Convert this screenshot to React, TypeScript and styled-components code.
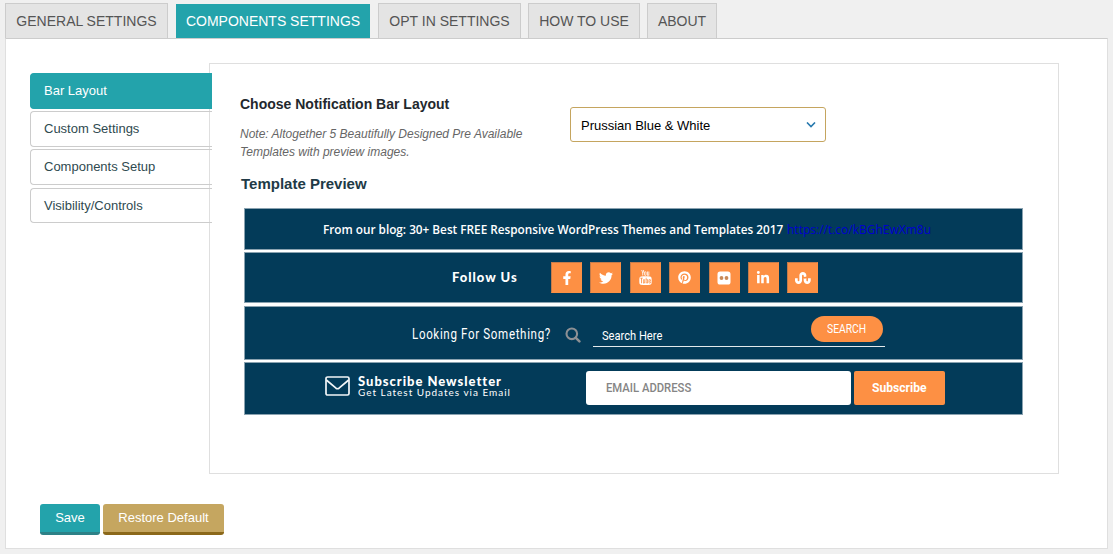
import React from 'react';
import styled, { createGlobalStyle } from 'styled-components';
import { FaFacebookF, FaTwitter, FaPinterest, FaLinkedinIn, FaStumbleupon } from 'react-icons/fa';
import { TfiYoutube } from 'react-icons/tfi';

const GlobalStyle = createGlobalStyle`
  * { box-sizing: border-box; }
  body {
    margin: 0;
    background: #f0f0f0;
    font-family: "Liberation Sans", Arial, sans-serif;
    overflow: hidden;
  }
`;

const Page = styled.div`
  width: 1113px;
  height: 554px;
  padding: 3px 5px 0;
`;

const Tabs = styled.nav`
  display: flex;
  height: 35px;
  align-items: flex-end;
`;

const Tab = styled.a<{ $width: number; $gap: number; $active?: boolean }>`
  width: ${p => p.$width}px;
  height: ${p => (p.$active ? 34 : 35)}px;
  margin-right: ${p => p.$gap}px;
  border: ${p => (p.$active ? '0' : '1px solid #ccc')};
  border-bottom: 0;
  background: ${p => (p.$active ? '#23a3ab' : '#e4e4e4')};
  color: ${p => (p.$active ? '#fff' : '#555')};
  font-size: 14px;
  line-height: 34px;
  text-align: center;
  white-space: nowrap;
`;

const Panel = styled.main`
  width: 1103px;
  height: 511px;
  border: 1px solid #dfdfdf;
  border-top-color: #ccc;
  background: #fff;
  padding: 24px 0 0 24px;
`;

const Columns = styled.div`
  display: flex;
  height: 411px;
`;

const SideNav = styled.nav`
  width: 182px;
  margin-right: -3px;
  padding-top: 10px;
  position: relative;
  z-index: 1;
  flex: none;
`;

const SideItem = styled.a<{ $active?: boolean; $gap: number; $height: number }>`
  display: block;
  height: ${p => p.$height}px;
  margin-bottom: ${p => p.$gap}px;
  padding-left: 13px;
  border: 1px solid ${p => (p.$active ? '#23a3ab' : '#ccc')};
  border-right: 0;
  border-radius: 4px 0 0 4px;
  background: ${p => (p.$active ? '#23a3ab' : 'transparent')};
  color: ${p => (p.$active ? '#fff' : '#2f4a50')};
  font-size: 13px;
  line-height: 33px;
`;

const Content = styled.section`
  width: 850px;
  border: 1px solid #dfdfdf;
  padding: 31px 0 0 30px;
`;

const OptionRow = styled.div`
  display: flex;
  height: 80px;
`;

const OptionText = styled.div`
  width: 330px;
`;

const Heading = styled.h3<{ $color: string; $size?: number; $indent?: number }>`
  margin: 0 0 0 ${p => p.$indent ?? 0}px;
  color: ${p => p.$color};
  font-size: ${p => p.$size ?? 14}px;
  line-height: 18px;
  font-weight: 700;
`;

const Note = styled.p`
  margin: 12px 0 0;
  color: #666;
  font-size: 12px;
  line-height: 18px;
  font-style: italic;
`;

const Select = styled.div`
  display: flex;
  justify-content: space-between;
  align-items: center;
  width: 256px;
  height: 35px;
  margin-top: 12px;
  padding: 1px 9px 0 10px;
  border: 1px solid #c5a55f;
  border-radius: 3px;
  color: #000;
  font-size: 13px;
`;

const Preview = styled.div`
  width: 779px;
  margin: 15px 0 0 4px;
  display: flex;
  flex-direction: column;
`;

const Bar = styled.div<{ $height: number; $gap: number; $left: number; $lift?: number }>`
  display: flex;
  align-items: center;
  height: ${p => p.$height}px;
  margin-bottom: ${p => p.$gap}px;
  padding: 0 0 ${p => p.$lift ?? 0}px ${p => p.$left}px;
  border: 1px solid #8aa2b0;
  background: #033b59;
  color: #fff;
`;

const Label = styled.span<{
  $width: number; $size: number; $family?: string; $weight?: number; $line?: number;
  $spacing?: number; $scale?: number; $color?: string; $shift?: number;
}>`
  display: block;
  flex: none;
  width: ${p => p.$width}px;
  margin-top: ${p => p.$shift ?? 0}px;
  font-family: ${p => p.$family ?? '"Open Sans"'}, sans-serif;
  font-size: ${p => p.$size}px;
  font-weight: ${p => p.$weight ?? 400};
  letter-spacing: ${p => p.$spacing ?? 0}px;
  line-height: ${p => (p.$line ? `${p.$line}px` : '1.2')};
  color: ${p => p.$color ?? '#fff'};
  white-space: nowrap;
  transform: scaleX(${p => p.$scale ?? 1});
  transform-origin: left center;
`;

const SocialList = styled.div`
  display: flex;
  gap: 8.4px;
`;

const SocialButton = styled.span`
  display: flex;
  align-items: center;
  justify-content: center;
  width: 31px;
  height: 31px;
  background: #fd9044;
  border: 1px solid #c47b4b;
  border-bottom-color: #fd9044;
  border-right-color: #fd9044;
  color: #fff;
`;

const SearchField = styled.div`
  display: flex;
  justify-content: space-between;
  width: 292px;
  height: 31px;
  margin: -1px 0 0 12px;
  padding: 0 2px 0 9px;
  border-bottom: 1px solid #e3e9ec;
`;

const SearchButton = styled.div`
  display: flex;
  align-items: center;
  width: 72px;
  height: 26px;
  padding-left: 16px;
  border-radius: 13px;
  background: #fd9044;
`;

const NewsletterText = styled.div`
  width: 228px;
  margin: -3px 0 0 8px;
`;

const EmailField = styled.div`
  display: flex;
  align-items: center;
  width: 265px;
  height: 34px;
  padding: 1px 0 0 20px;
  border-radius: 3px;
  background: #fff;
`;

const SubscribeButton = styled.div`
  display: flex;
  align-items: center;
  width: 91px;
  height: 34px;
  margin-left: 3px;
  padding: 1px 0 0 18px;
  border-radius: 2px;
  background: #fd9044;
`;

const Actions = styled.div`
  display: flex;
  gap: 3px;
  margin: 30px 0 0 10px;
`;

const ActionButton = styled.button<{ $width: number; $color: string; $edge: string }>`
  width: ${p => p.$width}px;
  height: 31px;
  padding: 0 0 2px;
  border: 0;
  border-bottom: 3px solid ${p => p.$edge};
  border-radius: 3px;
  background: ${p => p.$color};
  color: #fff;
  font: 13px "Liberation Sans", Arial, sans-serif;
`;

const IconSlot = styled.span<{ $lift: number }>`
  display: flex;
  flex: none;
  margin-bottom: ${p => p.$lift}px;
  margin-top: ${p => -p.$lift}px;
`;

const roboto = 'Roboto';

const ChevronIcon = () => (
  <svg width="10" height="7" viewBox="0 0 10 7" fill="none" stroke="#2779ae" strokeWidth="1.6">
    <path d="M1 0.5 5 4.5 9 0.5" />
  </svg>
);

const FlickrIcon = () => (
  <svg width="14" height="14" viewBox="0 0 14 14">
    <rect x="0.5" y="0.5" width="13" height="13" rx="2.6" fill="#fff" />
    <circle cx="4.5" cy="7" r="1.9" fill="#c98a58" />
    <circle cx="9.5" cy="7" r="1.9" fill="#c98a58" />
  </svg>
);

const SearchIcon = () => (
  <svg width="16" height="16" viewBox="0 0 16 16" fill="none" stroke="#8d9094">
    <circle cx="6.8" cy="6.8" r="5.3" strokeWidth="2.1" />
    <path d="m10.8 10.8 3.6 3.6" strokeWidth="2.5" strokeLinecap="round" />
  </svg>
);

const EnvelopeIcon = () => (
  <svg width="25" height="20" viewBox="0 0 25 20" fill="none" stroke="#f3f6f8" strokeWidth="1.7">
    <rect x="1" y="1" width="23" height="18" rx="1.6" />
    <path d="M1.3 4 11 12.2q1.5 1.1 3 0L23.7 4" />
  </svg>
);

export default function App() {
  return (
    <>
      <GlobalStyle />
      <Page>
        <Tabs>
          <Tab $width={163} $gap={8}>GENERAL SETTINGS</Tab>
          <Tab $width={194} $gap={8} $active>COMPONENTS SETTINGS</Tab>
          <Tab $width={143} $gap={7}>OPT IN SETTINGS</Tab>
          <Tab $width={112} $gap={7}>HOW TO USE</Tab>
          <Tab $width={70} $gap={0}>ABOUT</Tab>
        </Tabs>
        <Panel>
          <Columns>
            <SideNav>
              <SideItem $height={36} $gap={2} $active>Bar Layout</SideItem>
              <SideItem $height={36} $gap={2}>Custom Settings</SideItem>
              <SideItem $height={36} $gap={3}>Components Setup</SideItem>
              <SideItem $height={35} $gap={0}>Visibility/Controls</SideItem>
            </SideNav>
            <Content>
              <OptionRow>
                <OptionText>
                  <Heading $color="#23282d">Choose Notification Bar Layout</Heading>
                  <Note>
                    Note: Altogether 5 Beautifully Designed Pre Available<br />
                    Templates with preview images.
                  </Note>
                </OptionText>
                <Select>
                  Prussian Blue &amp; White
                  <ChevronIcon />
                </Select>
              </OptionRow>
              <Heading $color="#213a46" $size={15} $indent={1}>Template Preview</Heading>
              <Preview>
                <Bar $height={42} $gap={2} $left={78}>
                  <Label $width={464} $size={12} $weight={600} $scale={0.98} $shift={2}>
                    From our blog: 30+ Best FREE Responsive WordPress Themes and Templates 2017
                  </Label>
                  <Label $width={146} $size={12} $color="#0000d0" $shift={2}>https://t.co/kBGhEwXm8u</Label>
                </Bar>
                <Bar $height={51} $gap={3} $left={207}>
                  <Label $width={99} $size={13} $family="Lato" $weight={900} $spacing={0.98} $shift={0}>Follow Us</Label>
                  <SocialList>
                    <SocialButton><FaFacebookF size={14} /></SocialButton>
                    <SocialButton><FaTwitter size={14} /></SocialButton>
                    <SocialButton><TfiYoutube size={15} /></SocialButton>
                    <SocialButton><FaPinterest size={13} /></SocialButton>
                    <SocialButton><FlickrIcon /></SocialButton>
                    <SocialButton><FaLinkedinIn size={14} /></SocialButton>
                    <SocialButton><FaStumbleupon size={16} /></SocialButton>
                  </SocialList>
                </Bar>
                <Bar $height={54} $gap={2} $left={167} $lift={2}>
                  <Label $width={153} $size={14} $family={roboto} $spacing={0.8} $scale={0.825} $shift={4}>Looking For Something?</Label>
                  <IconSlot $lift={-3}><SearchIcon /></IconSlot>
                  <SearchField>
                    <Label $width={100} $size={13} $family={roboto} $scale={0.855} $shift={12}>Search Here</Label>
                    <SearchButton>
                      <Label $width={40} $size={12} $family={roboto} $scale={0.86} $shift={1}>SEARCH</Label>
                    </SearchButton>
                  </SearchField>
                </Bar>
                <Bar $height={53} $gap={0} $left={80} $lift={2}>
                  <IconSlot $lift={2}><EnvelopeIcon /></IconSlot>
                  <NewsletterText>
                    <Label $width={145} $size={13} $family="Lato" $weight={900} $spacing={0.98} $line={12}>Subscribe Newsletter</Label>
                    <Label $width={152} $size={10} $family="Lato" $weight={400} $spacing={0.98} $line={10}>Get Latest Updates via Email</Label>
                  </NewsletterText>
                  <EmailField>
                    <Label $width={86} $size={12} $family={roboto} $weight={500} $scale={0.94} $color="#858585">EMAIL ADDRESS</Label>
                  </EmailField>
                  <SubscribeButton>
                    <Label $width={56} $size={12} $family={roboto} $weight={700} $scale={1.01}>Subscribe</Label>
                  </SubscribeButton>
                </Bar>
              </Preview>
            </Content>
          </Columns>
          <Actions>
            <ActionButton $width={60} $color="#23a3ab" $edge="#2d8187">Save</ActionButton>
            <ActionButton $width={121} $color="#c5a660" $edge="#8b681a">Restore Default</ActionButton>
          </Actions>
        </Panel>
      </Page>
    </>
  );
}
